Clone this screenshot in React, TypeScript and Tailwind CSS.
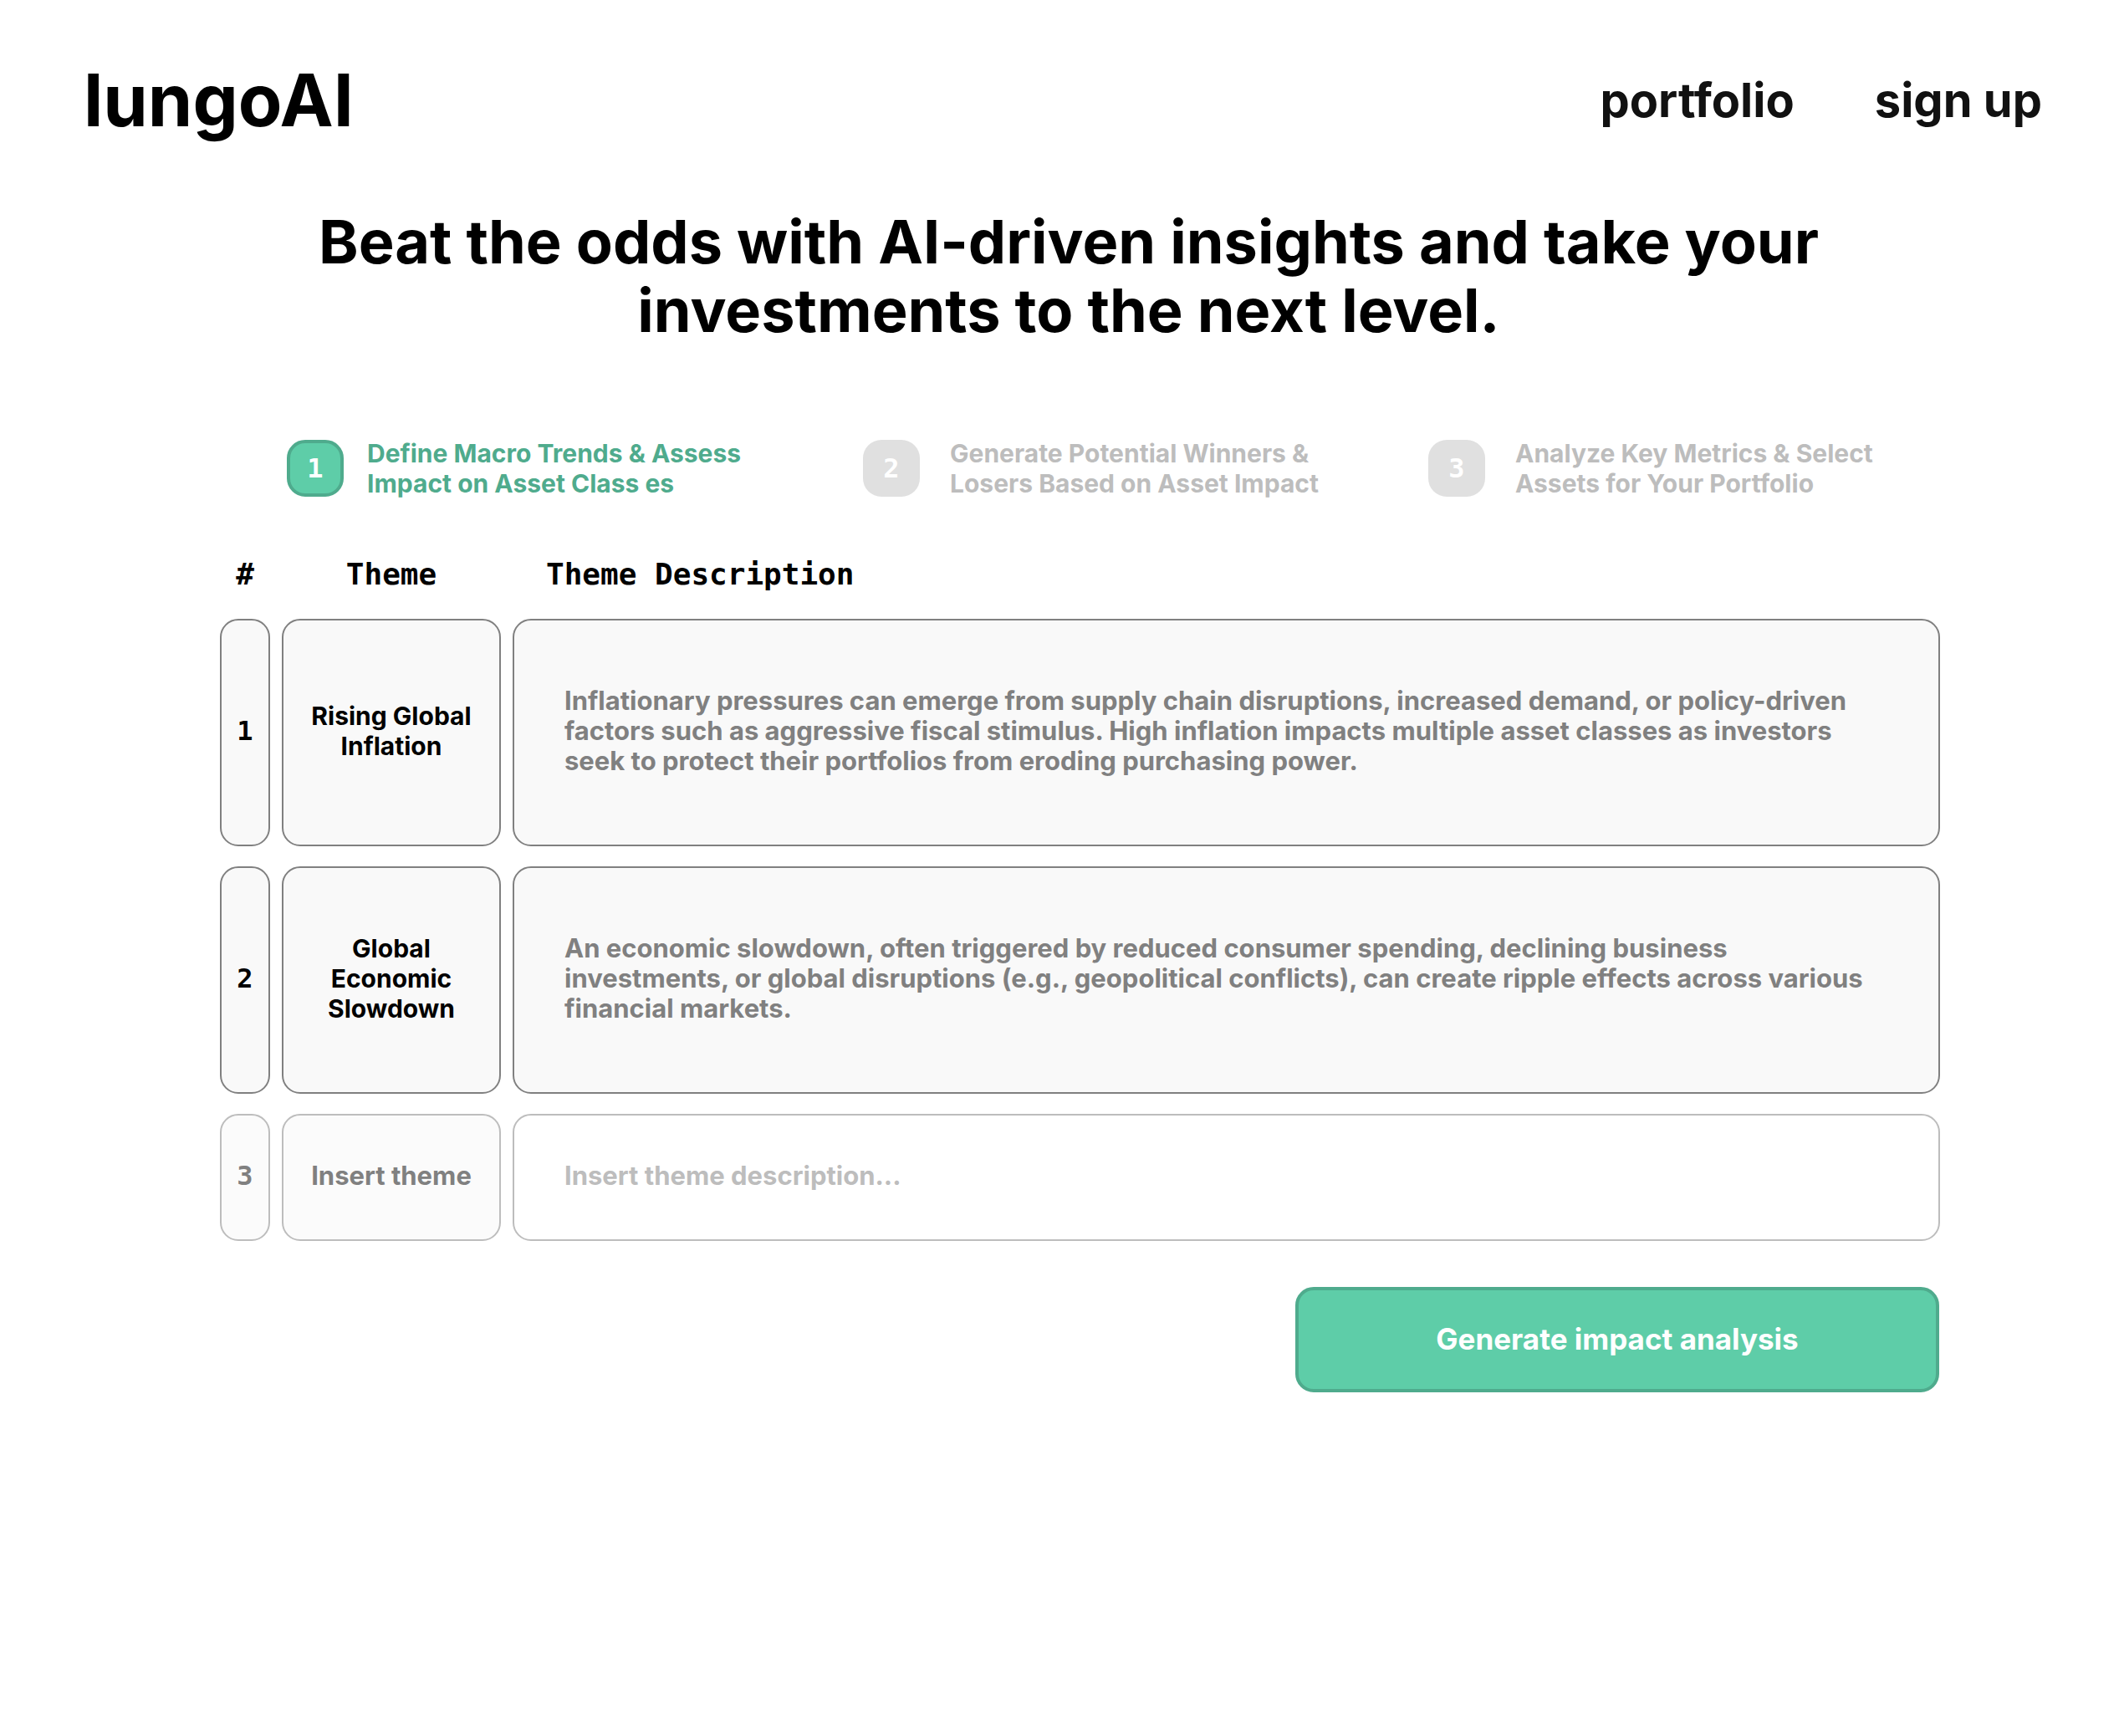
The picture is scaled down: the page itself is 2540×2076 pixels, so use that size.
type Step = { id: number; lines: [string, string]; active?: boolean };
type Theme = { id: number; name: string[]; description: string[] };

const steps: Step[] = [
  { id: 1, lines: ["Define Macro Trends & Assess", "Impact on Asset Class es"], active: true },
  { id: 2, lines: ["Generate Potential Winners &", "Losers Based on Asset Impact"] },
  { id: 3, lines: ["Analyze Key Metrics & Select", "Assets for Your Portfolio"] },
];

const themes: Theme[] = [
  {
    id: 1,
    name: ["Rising Global", "Inflation"],
    description: [
      "Inflationary pressures can emerge from supply chain disruptions, increased demand, or policy-driven",
      "factors such as aggressive fiscal stimulus. High inflation impacts multiple asset classes as investors",
      "seek to protect their portfolios from eroding purchasing power.",
    ],
  },
  {
    id: 2,
    name: ["Global", "Economic", "Slowdown"],
    description: [
      "An economic slowdown, often triggered by reduced consumer spending, declining business",
      "investments, or global disruptions (e.g., geopolitical conflicts), can create ripple effects across various",
      "financial markets.",
    ],
  },
];

function Lines({ items }: { items: string[] }) {
  return (
    <>
      {items.map((line) => (
        <span key={line} className="block">
          {line}
        </span>
      ))}
    </>
  );
}

function StepItem({ step }: { step: Step }) {
  return (
    <li className={step.active ? "flex items-center gap-7 text-[#4fab8d]" : "flex items-center gap-9 text-[#bdbdbd]"}>
      <span
        className={
          step.active
            ? "flex size-[68px] shrink-0 items-center justify-center rounded-[22px] border-4 border-[#4fab8d] bg-[#5ecda8] font-['DejaVu_Sans_Mono',monospace] text-[32px] text-white"
            : "flex size-[68px] shrink-0 items-center justify-center rounded-[22px] bg-[#e0e0e0] font-['DejaVu_Sans_Mono',monospace] text-[32px] text-white"
        }
      >
        {step.id}
      </span>
      <span className="whitespace-nowrap text-[30px] leading-9">
        <Lines items={step.lines} />
      </span>
    </li>
  );
}

export default function App() {
  return (
    <div className="min-h-screen bg-white font-['Inter',sans-serif] font-bold text-black">
      <header className="flex items-center justify-between pt-[72px] pr-[98px] pl-[100px]">
        <a href="#" className="text-[86px] leading-[96px]">
          lungoAI
        </a>
        <nav className="flex gap-[96px] text-[56px] leading-[64px] text-[#111111]">
          <a href="#portfolio">portfolio</a>
          <a href="#signup">sign up</a>
        </nav>
      </header>

      <main>
        <h1 className="mt-20 pl-4 text-center text-[72px] leading-[82px]">
          <Lines
            items={["Beat the odds with AI-driven insights and take your", "investments to the next level."]}
          />
        </h1>

        <ol className="mt-28 grid grid-cols-[689fr_676fr_612fr] pr-[220px] pl-[343px]">
          {steps.map((step) => (
            <StepItem key={step.id} step={step} />
          ))}
        </ol>

        <div className="mt-9 pr-[206px] pl-[249px]">
          <table className="w-full table-fixed border-separate border-spacing-x-[14px] border-spacing-y-6">
            <colgroup>
              <col className="w-[60px]" />
              <col className="w-[262px]" />
              <col />
            </colgroup>
            <thead className="font-['DejaVu_Sans_Mono',monospace] text-[36px] leading-10">
              <tr>
                <th className="h-[60px] p-0 pt-0.5">#</th>
                <th className="p-0 pt-0.5">Theme</th>
                <th className="p-0 pt-0.5 pl-10 text-left">Theme Description</th>
              </tr>
            </thead>
            <tbody className="text-[31px] leading-9">
              {themes.map((theme) => (
                <tr key={theme.id}>
                  <td className="h-[272px] rounded-[22px] border-2 border-[#808080] bg-[#f9f9f9] p-0 pb-1 text-center font-['DejaVu_Sans_Mono',monospace] text-[32px]">
                    {theme.id}
                  </td>
                  <td className="rounded-[22px] border-2 border-[#808080] bg-[#f9f9f9] p-0 pb-1 text-center text-[30px]">
                    <Lines items={theme.name} />
                  </td>
                  <td className="rounded-[22px] border-2 border-[#808080] bg-[#f9f9f9] p-0 pr-10 pb-1 pl-[60px] text-[#808080]">
                    <Lines items={theme.description} />
                  </td>
                </tr>
              ))}
              <tr>
                <td className="h-[152px] rounded-[22px] border-2 border-[#bdbdbd] bg-[#fbfbfb] p-0 pb-1 text-center font-['DejaVu_Sans_Mono',monospace] text-[32px] text-[#808080]">
                  3
                </td>
                <td className="rounded-[22px] border-2 border-[#bdbdbd] bg-[#fbfbfb] p-0 pb-1">
                  <input
                    type="text"
                    aria-label="Theme"
                    placeholder="Insert theme"
                    className="block w-full text-center placeholder:text-[#808080] placeholder:opacity-100"
                  />
                </td>
                <td className="rounded-[22px] border-2 border-[#bdbdbd] bg-white p-0 pr-10 pb-1 pl-[60px]">
                  <input
                    type="text"
                    aria-label="Theme description"
                    placeholder="Insert theme description..."
                    className="block w-full placeholder:text-[#bdbdbd] placeholder:opacity-100"
                  />
                </td>
              </tr>
            </tbody>
          </table>
        </div>

        <div className="mt-[31px] flex justify-end pr-[221px]">
          <button
            type="button"
            className="h-[126px] w-[770px] rounded-[22px] border-4 border-[#4fab8d] bg-[#5ecda8] pb-0.5 text-[35px] text-white"
          >
            Generate impact analysis
          </button>
        </div>
      </main>
    </div>
  );
}
